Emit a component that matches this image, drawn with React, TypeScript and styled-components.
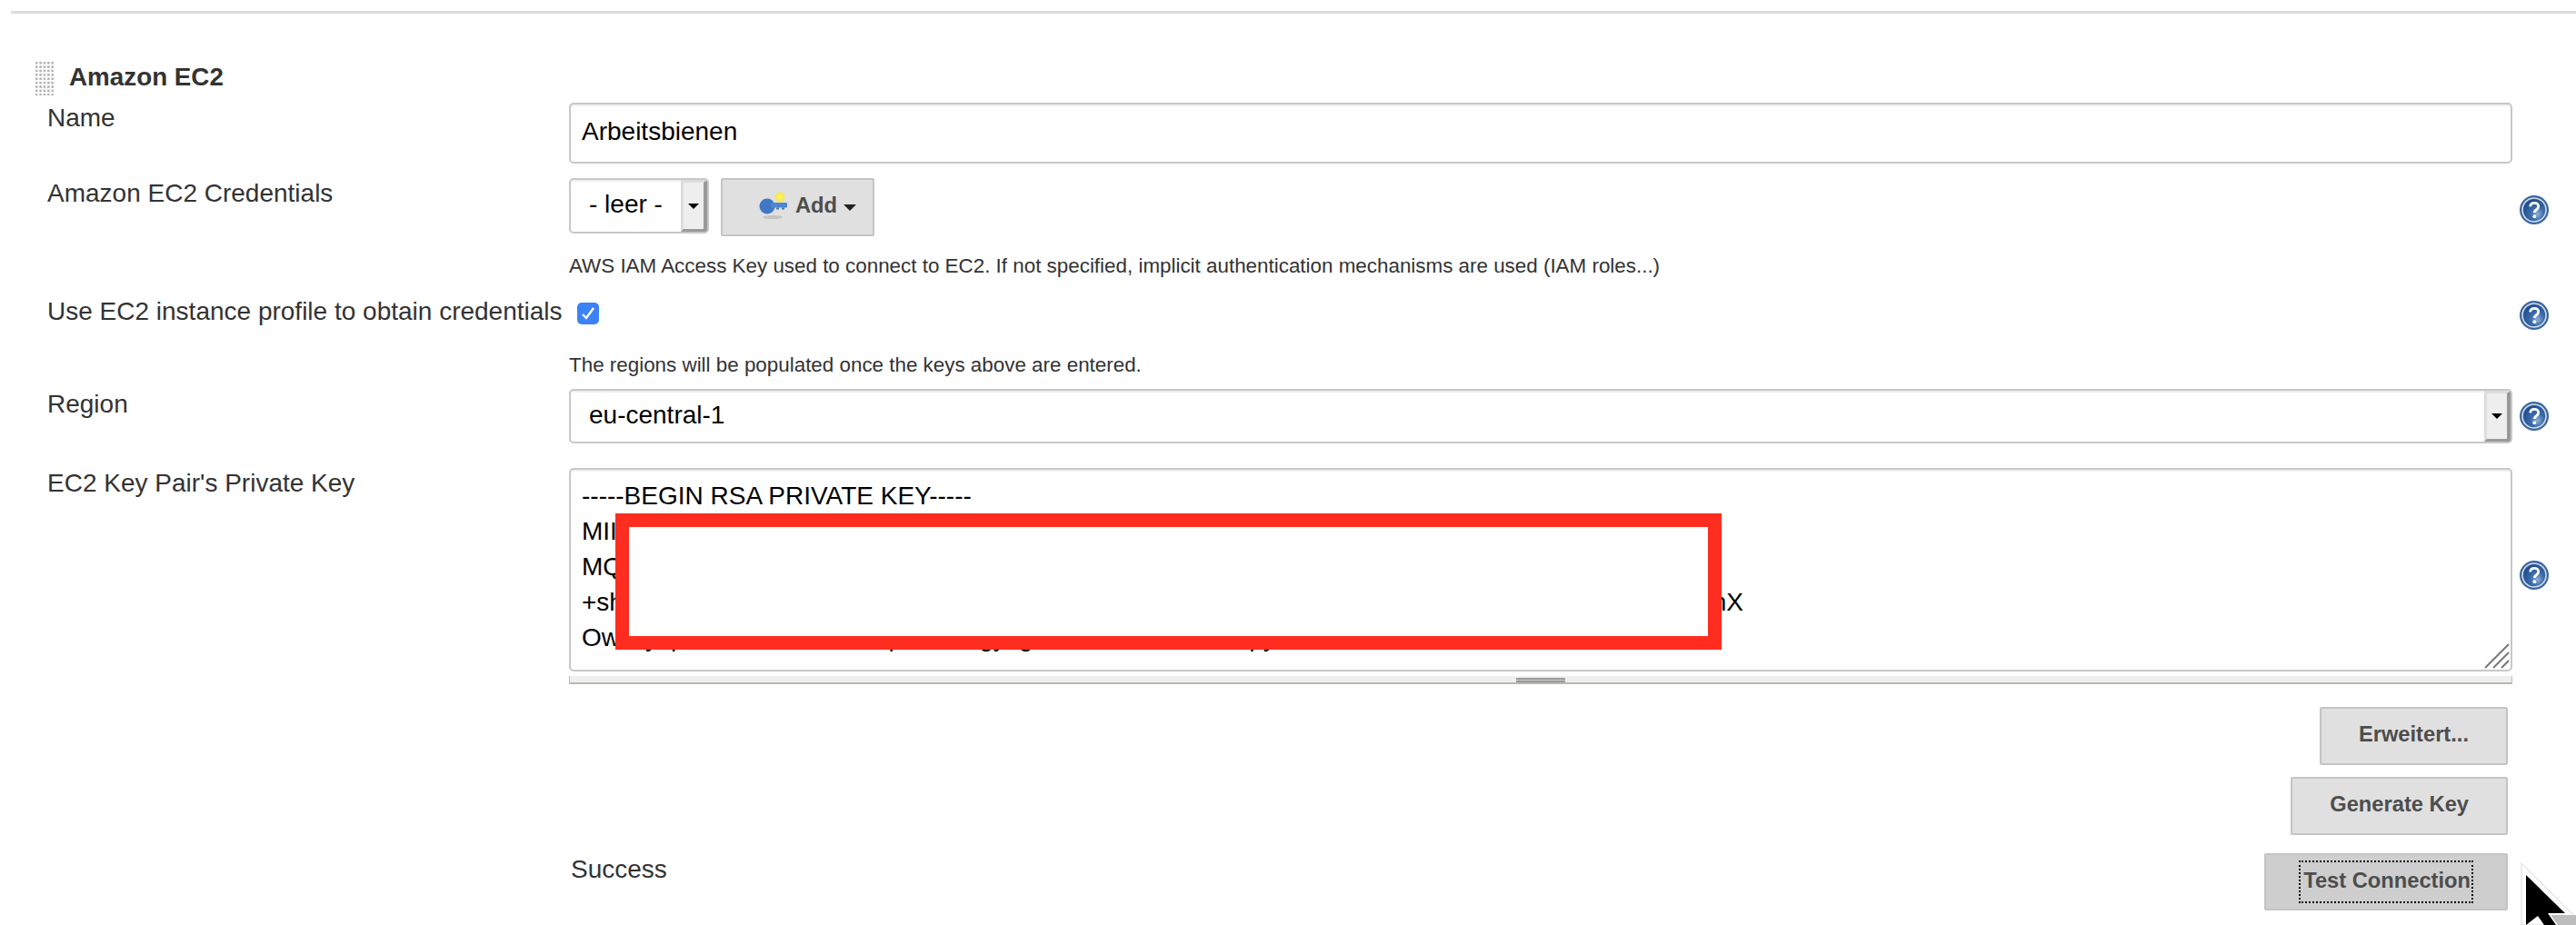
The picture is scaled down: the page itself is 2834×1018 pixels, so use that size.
import React from 'react';
import styled, { createGlobalStyle } from 'styled-components';

const GlobalStyle = createGlobalStyle`
  html, body {
    margin: 0;
    padding: 0;
    background: #fff;
  }

  body {
    font-family: "Liberation Sans", Arial, sans-serif;
    color: #333;
  }
`;

const HelpIcon: React.FC = () => (
  <svg width="32" height="32" viewBox="0 0 32 32">
    <defs>
      <radialGradient id="helpFill" cx="65%" cy="70%" r="70%">
        <stop offset="0%" stopColor="#8fb0d8" />
        <stop offset="45%" stopColor="#3c6cab" />
        <stop offset="100%" stopColor="#214f8e" />
      </radialGradient>
    </defs>
    <circle cx="16" cy="16" r="16" fill="#3a659f" />
    <circle cx="16" cy="16" r="13" fill="none" stroke="#cfdcec" strokeWidth="1.6" />
    <circle cx="16" cy="16" r="11.6" fill="url(#helpFill)" />
    <path
      d="M11.6 12.4c.3-2.6 2.2-4 4.6-4 2.6 0 4.5 1.5 4.5 3.8 0 3.4-4.4 3.4-4.4 6.8"
      fill="none"
      stroke="#fff"
      strokeWidth="2.8"
    />
    <circle cx="16.3" cy="23.2" r="1.9" fill="#fff" />
  </svg>
);

const KeyIcon: React.FC = () => (
  <svg width="34" height="34" viewBox="0 0 34 34">
    <defs>
      <radialGradient id="keyGlow">
        <stop offset="0%" stopColor="#fff36a" />
        <stop offset="65%" stopColor="#f6e94a" />
        <stop offset="100%" stopColor="#f6e94a" stopOpacity="0" />
      </radialGradient>
    </defs>
    <ellipse cx="16" cy="29" rx="11" ry="2" fill="#c4c4c4" />
    <circle cx="24" cy="7" r="6.5" fill="url(#keyGlow)" />
    <circle cx="10" cy="17" r="8.5" fill="#3f78c4" />
    <rect x="14" y="13" width="18" height="5.5" rx="1" fill="#4f86cf" />
    <rect x="20" y="18.5" width="3" height="2" fill="#3f78c4" />
    <rect x="26" y="18.5" width="3" height="2" fill="#3f78c4" />
  </svg>
);

const Page = styled.div`
  position: relative;
  width: 2834px;
  height: 1018px;
  overflow: hidden;
  padding-top: 12px;
  box-sizing: border-box;
`;

const TopRule = styled.div`
  height: 3px;
  margin-left: 12px;
  background: #ddd;
`;

const SectionHeader = styled.div`
  display: flex;
  align-items: center;
  height: 38px;
  margin: 52px 0 0 38px;
  gap: 16px;
`;

const Grip = styled.div`
  width: 22px;
  height: 38px;
  background-image: radial-gradient(circle, #b4b4b4 1.2px, transparent 1.6px);
  background-size: 4.4px 4.4px;
`;

const SectionTitle = styled.div`
  padding-bottom: 2px;
  font-size: 27.8px;
  font-weight: bold;
  color: #333;
`;

const Row = styled.div<{ $top: number }>`
  display: grid;
  grid-template-columns: 574px 2138px 40px;
  padding-left: 52px;
  margin-top: ${({ $top }) => $top}px;
`;

const Label = styled.div`
  font-size: 28px;
  line-height: 34px;
  color: #333;
  white-space: nowrap;
`;

const HelpSlot = styled.div<{ $top: number }>`
  justify-self: end;
  height: 32px;
  margin-top: ${({ $top }) => $top}px;
`;

const Hint = styled.div`
  grid-column: 2;
  font-size: 22.4px;
  line-height: 28px;
  color: #333;
  white-space: nowrap;
`;

const TextBox = styled.div`
  box-sizing: border-box;
  height: 67px;
  padding: 0 12px 3px;
  display: flex;
  align-items: center;
  font-size: 28px;
  color: #000;
  background: #fff;
  border: 2px solid #c8c8c8;
  border-radius: 5px;
  box-shadow: inset 0 2px 2px #eee;
`;

const CredentialControls = styled.div`
  display: flex;
  align-items: flex-start;
  gap: 13px;
`;

const SelectBox = styled.div<{ $width?: string; $height: number }>`
  box-sizing: border-box;
  display: flex;
  width: ${({ $width }) => $width || '100%'};
  height: ${({ $height }) => $height}px;
  background: #fff;
  border: 2px solid #c8c8c8;
  border-radius: 5px;
  box-shadow: inset 0 2px 2px #eee;
  overflow: hidden;
`;

const SelectValue = styled.div`
  flex: 1;
  display: flex;
  align-items: center;
  padding: 0 0 3px 20px;
  font-size: 28px;
  color: #000;
  white-space: nowrap;
`;

const SelectArrow = styled.div`
  box-sizing: border-box;
  width: 29px;
  display: flex;
  align-items: center;
  justify-content: center;
  background: #eee;
  border-left: 3px solid #ddd;
  border-top: 3px solid #ddd;
  border-right: 4px solid #999;
  border-bottom: 3px solid #999;

  &::after {
    content: '';
    border-left: 6px solid transparent;
    border-right: 6px solid transparent;
    border-top: 6px solid #000;
  }
`;

const Button = styled.div<{ $pressed?: boolean }>`
  box-sizing: border-box;
  display: flex;
  align-items: center;
  height: ${({ $pressed }) => ($pressed ? 63 : 64)}px;
  padding: ${({ $pressed }) => ($pressed ? '0 36px' : '0 41px 3px')};
  font-size: 23.7px;
  font-weight: bold;
  color: #4d4d4d;
  white-space: nowrap;
  background: ${({ $pressed }) => ($pressed ? '#cecece' : '#e0e0e0')};
  border: 2px solid #c4c4c4;
  border-radius: 2px;
`;

const AddButton = styled(Button)`
  height: 64px;
  padding: 0 18px 3px 39px;
  gap: 7px;
`;

const AddCaret = styled.span`
  margin-top: 3px;
  border-left: 7px solid transparent;
  border-right: 7px solid transparent;
  border-top: 7px solid #222;
`;

const CheckBox = styled.div`
  display: flex;
  align-items: center;
  justify-content: center;
  width: 24px;
  height: 24px;
  margin: 7px 0 0 9px;
  background: #3b82f6;
  border-radius: 5px;
`;

const KeyField = styled.div`
  display: flex;
  flex-direction: column;
  height: 238px;
`;

const KeyBox = styled.div`
  position: relative;
  box-sizing: border-box;
  height: 224px;
  padding: 9px 12px 0;
  overflow: hidden;
  font-size: 28px;
  line-height: 39px;
  color: #000;
  background: #fff;
  border: 2px solid #c8c8c8;
  border-radius: 5px;
  box-shadow: inset 0 2px 2px #eee;
`;

const KeyLine = styled.div`
  white-space: nowrap;
`;

const Redaction = styled.div`
  position: absolute;
  left: 49px;
  top: 48px;
  width: 1217px;
  height: 150px;
  box-sizing: border-box;
  background: #fff;
  border: 15px solid #ff2d20;
`;

const ResizeCorner = styled.svg`
  position: absolute;
  right: 1px;
  bottom: 1px;
`;

const ResizeBar = styled.div`
  box-sizing: border-box;
  display: flex;
  justify-content: center;
  height: 9px;
  margin-top: 5px;
  padding-top: 2px;
  background: #eee;
  border-left: 1px solid #bbb;
  border-right: 1px solid #bbb;
  border-bottom: 2px solid #b8b8b0;
`;

const ResizeGrip = styled.div`
  width: 54px;
  height: 5px;
  border-top: 2px solid #999;
  border-bottom: 2px solid #999;
  box-sizing: border-box;
  background: #ccc;
`;

const ButtonStack = styled.div<{ $top: number }>`
  display: flex;
  justify-content: flex-end;
  padding-right: 75px;
  margin-top: ${({ $top }) => $top}px;
`;

const ResultRow = styled.div`
  display: flex;
  justify-content: space-between;
  align-items: flex-start;
  margin-top: 20px;
  padding: 0 75px 0 628px;
`;

const ResultText = styled.div`
  margin-top: 1px;
  font-size: 28px;
  line-height: 34px;
  color: #333;
`;

const FocusRing = styled.span`
  display: flex;
  align-items: center;
  height: 47px;
  padding: 0 1px 3px 3px;
  box-sizing: border-box;
  border: 2px dotted #000;
`;

const Cursor = styled.svg`
  position: absolute;
  left: 2770px;
  top: 945px;
`;

const App: React.FC = () => (
  <Page>
    <GlobalStyle />
    <TopRule />

    <SectionHeader>
      <Grip />
      <SectionTitle>Amazon EC2</SectionTitle>
    </SectionHeader>

    <Row $top={8}>
      <Label>Name</Label>
      <TextBox>Arbeitsbienen</TextBox>
    </Row>

    <Row $top={16}>
      <Label>Amazon EC2 Credentials</Label>
      <CredentialControls>
        <SelectBox $width="154px" $height={61}>
          <SelectValue>- leer -</SelectValue>
          <SelectArrow />
        </SelectBox>
        <AddButton>
          <KeyIcon />
          <span>Add</span>
          <AddCaret />
        </AddButton>
      </CredentialControls>
      <HelpSlot $top={19}>
        <HelpIcon />
      </HelpSlot>
    </Row>

    <Row $top={19}>
      <Hint>
        AWS IAM Access Key used to connect to EC2. If not specified, implicit authentication mechanisms are used (IAM
        roles...)
      </Hint>
    </Row>

    <Row $top={19}>
      <Label>Use EC2 instance profile to obtain credentials</Label>
      <CheckBox>
        <svg width="18" height="18" viewBox="0 0 18 18">
          <path d="M3 10l4 4 8-11" fill="none" stroke="#fff" strokeWidth="2.4" />
        </svg>
      </CheckBox>
      <HelpSlot $top={5}>
        <HelpIcon />
      </HelpSlot>
    </Row>

    <Row $top={25}>
      <Hint>The regions will be populated once the keys above are entered.</Hint>
    </Row>

    <Row $top={12}>
      <Label>Region</Label>
      <SelectBox $height={60}>
        <SelectValue>eu-central-1</SelectValue>
        <SelectArrow />
      </SelectBox>
      <HelpSlot $top={14}>
        <HelpIcon />
      </HelpSlot>
    </Row>

    <Row $top={27}>
      <Label>EC2 Key Pair's Private Key</Label>
      <KeyField>
        <KeyBox>
          <KeyLine>-----BEGIN RSA PRIVATE KEY-----</KeyLine>
          <KeyLine>MII</KeyLine>
          <KeyLine>MQ</KeyLine>
          <KeyLine>
            +shtxxxxxxxxxxxxxxxxxxxxxxxxxxxxxxxxxxxxxxxxxxxxxxxxxxxxxxxxxxxxxxxxxxxxxxxxxxxxxxxxxxxxxnX
          </KeyLine>
          <KeyLine>Owxxyxpxxxxxxxxxxxxxxxxpxxxxxxgyxgxxxxxxxxxxxxxxxxxpy</KeyLine>
          <Redaction />
          <ResizeCorner width="28" height="28" viewBox="0 0 28 28">
            <path d="M1 27L27 1M10 27L27 10M19 27L27 19" stroke="#777" strokeWidth="2" />
          </ResizeCorner>
        </KeyBox>
        <ResizeBar>
          <ResizeGrip />
        </ResizeBar>
      </KeyField>
      <HelpSlot $top={102}>
        <HelpIcon />
      </HelpSlot>
    </Row>

    <ButtonStack $top={25}>
      <Button>Erweitert...</Button>
    </ButtonStack>
    <ButtonStack $top={13}>
      <Button>Generate Key</Button>
    </ButtonStack>
    <ResultRow>
      <ResultText>Success</ResultText>
      <Button $pressed>
        <FocusRing>Test Connection</FocusRing>
      </Button>
    </ResultRow>

    <Cursor width="64" height="73" viewBox="0 0 64 73">
      <path d="M4 5L62 63L64 73H4Z" fill="#fff" stroke="#d8d8d8" strokeWidth="1" />
      <path d="M36 62H64V73H44Z" fill="#bdbdbd" />
      <path d="M9 18L52 60H33L42 73H29L22 63L9 73Z" fill="#000" />
    </Cursor>
  </Page>
);

export default App;
